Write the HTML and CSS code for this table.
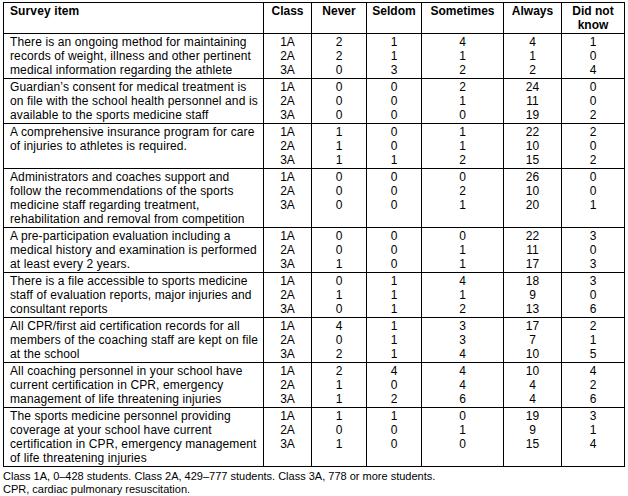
FILE: index.html
```html
<!DOCTYPE html>
<html>
<head>
<meta charset="utf-8">
<link rel="stylesheet" href="styles.css">
</head>
<body>
<table class="survey">
  <colgroup>
    <col class="c-item"><col class="c-class"><col class="c-never"><col class="c-seldom"><col class="c-some"><col class="c-always"><col class="c-dnk">
  </colgroup>
  <thead>
    <tr>
      <th class="item">Survey item</th>
      <th>Class</th>
      <th>Never</th>
      <th>Seldom</th>
      <th>Sometimes</th>
      <th>Always</th>
      <th>Did not<br>know</th>
    </tr>
  </thead>
  <tbody>
    <tr>
      <td class="item">There is an ongoing method for maintaining<br>records of weight, illness and other pertinent<br>medical information regarding the athlete</td>
      <td>1A<br>2A<br>3A</td><td>2<br>2<br>0</td><td>1<br>1<br>3</td><td>4<br>1<br>2</td><td>4<br>1<br>2</td><td>1<br>0<br>4</td>
    </tr>
    <tr>
      <td class="item">Guardian’s consent for medical treatment is<br>on file with the school health personnel and is<br>available to the sports medicine staff</td>
      <td>1A<br>2A<br>3A</td><td>0<br>0<br>0</td><td>0<br>0<br>0</td><td>2<br>1<br>0</td><td>24<br>11<br>19</td><td>0<br>0<br>2</td>
    </tr>
    <tr>
      <td class="item">A comprehensive insurance program for care<br>of injuries to athletes is required.</td>
      <td>1A<br>2A<br>3A</td><td>1<br>1<br>1</td><td>0<br>0<br>1</td><td>1<br>1<br>2</td><td>22<br>10<br>15</td><td>2<br>0<br>2</td>
    </tr>
    <tr>
      <td class="item">Administrators and coaches support and<br>follow the recommendations of the sports<br>medicine staff regarding treatment,<br>rehabilitation and removal from competition</td>
      <td>1A<br>2A<br>3A</td><td>0<br>0<br>0</td><td>0<br>0<br>0</td><td>0<br>2<br>1</td><td>26<br>10<br>20</td><td>0<br>0<br>1</td>
    </tr>
    <tr>
      <td class="item">A pre-participation evaluation including a<br>medical history and examination is performed<br>at least every 2 years.</td>
      <td>1A<br>2A<br>3A</td><td>0<br>0<br>1</td><td>0<br>0<br>0</td><td>0<br>1<br>1</td><td>22<br>11<br>17</td><td>3<br>0<br>3</td>
    </tr>
    <tr>
      <td class="item">There is a file accessible to sports medicine<br>staff of evaluation reports, major injuries and<br>consultant reports</td>
      <td>1A<br>2A<br>3A</td><td>0<br>1<br>0</td><td>1<br>1<br>1</td><td>4<br>1<br>2</td><td>18<br>9<br>13</td><td>3<br>0<br>6</td>
    </tr>
    <tr>
      <td class="item">All CPR/first aid certification records for all<br>members of the coaching staff are kept on file<br>at the school</td>
      <td>1A<br>2A<br>3A</td><td>4<br>0<br>2</td><td>1<br>1<br>1</td><td>3<br>3<br>4</td><td>17<br>7<br>10</td><td>2<br>1<br>5</td>
    </tr>
    <tr>
      <td class="item">All coaching personnel in your school have<br>current certification in CPR, emergency<br>management of life threatening injuries</td>
      <td>1A<br>2A<br>3A</td><td>2<br>1<br>1</td><td>4<br>0<br>2</td><td>4<br>4<br>6</td><td>10<br>4<br>4</td><td>4<br>2<br>6</td>
    </tr>
    <tr>
      <td class="item">The sports medicine personnel providing<br>coverage at your school have current<br>certification in CPR, emergency management<br>of life threatening injuries</td>
      <td>1A<br>2A<br>3A</td><td>1<br>0<br>1</td><td>1<br>0<br>0</td><td>0<br>1<br>0</td><td>19<br>9<br>15</td><td>3<br>1<br>4</td>
    </tr>
  </tbody>
</table>
<p class="note">Class 1A, 0–428 students. Class 2A, 429–777 students. Class 3A, 778 or more students.<br>CPR, cardiac pulmonary resuscitation.</p>
</body>
</html>
```
FILE: styles.css
```css
html, body {
  margin: 0;
  background: #ffffff;
}
body {
  padding: 2px 0 0 3px;
  font-family: "Liberation Sans", Arial, sans-serif;
  color: #000000;
}
.survey {
  border-collapse: collapse;
  table-layout: fixed;
  width: 621px;
  font-size: 12px;
  line-height: 14px;
}
.c-item { width: 260px; }
.c-class { width: 48px; }
.c-never { width: 55px; }
.c-seldom { width: 55px; }
.c-some { width: 82px; }
.c-always { width: 58px; }
.c-dnk { width: 63px; }
.survey th,
.survey td {
  border: 1px solid #000000;
  padding: 1px 2px 1px;
  vertical-align: top;
  text-align: center;
}
.survey th {
  font-weight: bold;
}
.survey .item {
  text-align: left;
  padding-left: 6px;
  padding-right: 4px;
  letter-spacing: 0.12px;
  white-space: nowrap;
}
.note {
  margin: 3px 0 0;
  font-size: 11px;
  line-height: 13px;
}
```
